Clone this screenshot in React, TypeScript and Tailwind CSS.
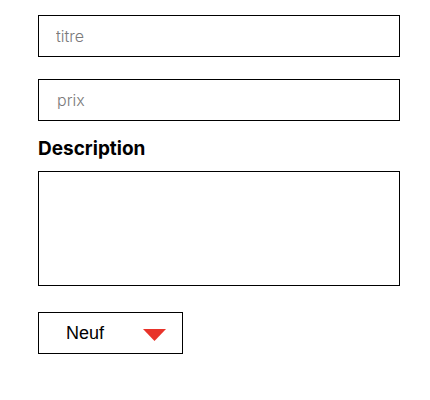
export default function App() {
    return (
        <div className="min-h-screen bg-white pl-[38px] pt-[15px] font-['Inter','Liberation_Sans',sans-serif]">
            <form className="flex flex-col w-[362px]">
                <input
                    type="text"
                    name="titre"
                    placeholder="titre"
                    className="h-[42px] w-full border border-black px-[17px] text-[16px] font-light text-black placeholder:text-[#7a7a7a] outline-none"
                />
                <input
                    type="text"
                    name="prix"
                    placeholder="prix"
                    className="mt-[22px] h-[42px] w-full border border-black px-[18px] text-[16px] font-light text-black placeholder:text-[#7a7a7a] outline-none"
                />
                <label htmlFor="description" className="mt-[14px] text-[19px] leading-[28px] font-bold text-black">
                    Description
                </label>
                <textarea
                    id="description"
                    name="description"
                    className="mt-[8px] h-[115px] w-full resize-none border border-black outline-none"
                />
                <div className="mt-[26px] flex h-[42px] w-[145px] items-center border border-black font-['Liberation_Sans',Arial,sans-serif]">
                    <span className="ml-[27px] text-[18px] text-black">Neuf</span>
                    <svg className="ml-auto mr-[16px] mt-[3px]" width="23" height="12" viewBox="0 0 23 12">
                        <polygon points="0,0 23,0 11.5,12" fill="#e8332a" />
                    </svg>
                </div>
            </form>
        </div>
    );
}
